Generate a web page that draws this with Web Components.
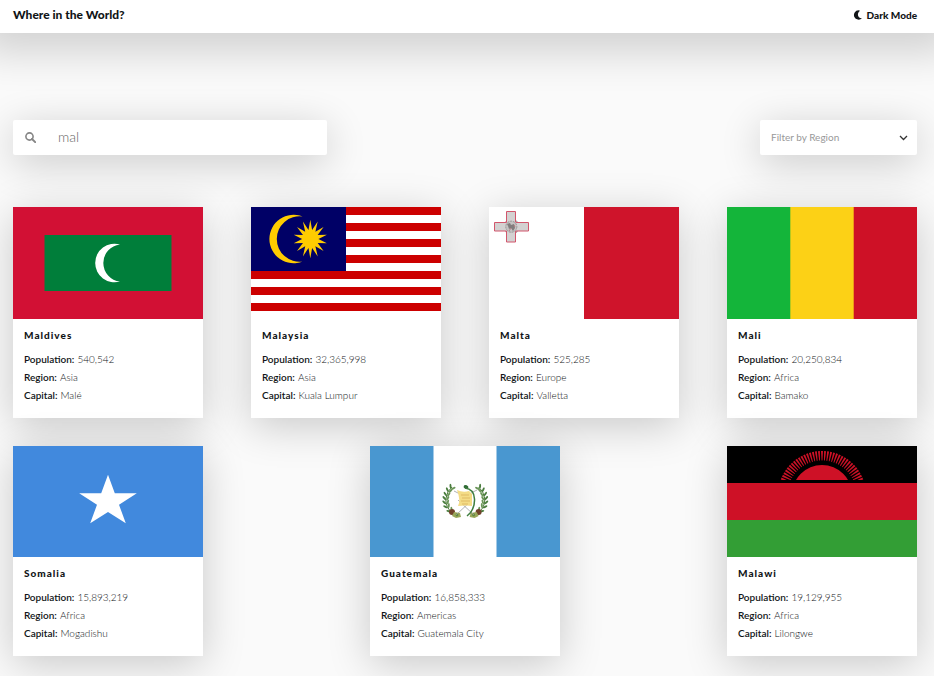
<!DOCTYPE html>
<html lang="en">
<head>
<meta charset="utf-8">
<meta name="viewport" content="width=device-width, initial-scale=1">
<title>Where in the World?</title>
<style>
body{margin:0;background:#fafafa;color:#111517;font-family:Lato,"Open Sans",sans-serif;font-size:10px;line-height:18px;
--surface:#fff;--ink:#111517;--muted:#858585;--shadow:0 8px 40px rgba(0,0,0,.2)}
</style>
</head>
<body>
<countries-app></countries-app>
<script>
const starPoints = (n, cx, cy, rx, ry, inner) => Array.from({length: n * 2}, (_, i) => {
  const a = Math.PI * i / n, k = i % 2 ? inner : 1;
  return (cx + Math.sin(a) * rx * k).toFixed(2) + ',' + (cy - Math.cos(a) * ry * k).toFixed(2);
}).join(' ');

const rays = () => Array.from({length: 39}, (_, i) => {
  const a = (-76 + i * 4) * Math.PI / 180, w = 0.023;
  const p = (r, t) => (95 + Math.sin(t) * r).toFixed(2) + ',' + (49 - Math.cos(t) * r).toFixed(2);
  return `<polygon points="${p(34.5, a - w * .5)} ${p(44, a - w)} ${p(44, a + w)} ${p(34.5, a + w * .5)}"/>`;
}).join('');

const branch = () => {
  let s = '<path d="M90 70C80 68 75 60 76 52Q77 45 82 41" fill="none" stroke="#4c7a3a" stroke-width="1"/>';
  const pts = [[82,41,30],[79,44,10],[77,48,0],[76,52,-5],[76,56,-15],[77,60,-30],[80,64,-45]];
  for (const [x, y, r] of pts) {
    s += `<g transform="translate(${x} ${y}) rotate(${r})" fill="#4a7d3e"><ellipse cx="-1.400" cy="-1" rx="1" ry="2.500" transform="rotate(-35)"/><ellipse cx="1.700" cy="-.6" rx="1" ry="2.500" fill="#6b9659" transform="rotate(35)"/></g>`;
  }
  return s + '<ellipse cx="82" cy="66" rx="3" ry="3" fill="#70422b"/><path d="M84 66l6 1 1 4-5 1-4-2z" fill="#9aa75a"/><circle cx="87" cy="69" r="1.400" fill="#5f8a3f"/>';
};

const flags = {
  Maldives: [112, '<path fill="#d21034" d="M0 0h190v112H0z"/><path fill="#007e3a" d="M31.500 28h127v56h-127z"/><path fill="#fff" d="M107 37.500A19.300 19.300 0 1 0 107 74.500A18.600 18.600 0 0 1 107 37.500z"/>'],
  Malaysia: [112, '<path fill="#fff" d="M0 0h190v112H0z"/><path stroke="#c00" stroke-width="8" d="M0 4h190M0 20h190M0 36h190M0 52h190M0 68h190M0 84h190M0 100h190"/><path fill="#006" d="M0 0h95v64H0z"/><g fill="#fc0"><path d="M51.500 9.500A24.200 24.200 0 1 0 51.500 54.500A22.700 22.700 0 1 1 51.500 9.500z"/><polygon points="' + starPoints(14, 59.3, 32, 17, 19.3, .48) + '"/></g>'],
  Malta: [112, '<path fill="#fff" d="M0 0h95v112H0z"/><path fill="#cf142b" d="M95 0h95v112H95z"/><circle cx="22.500" cy="19.700" r="8" fill="#aaa6a6"/><path fill="#d3d1d1" stroke="#d2566c" d="M17.500 4.500h9v11h13v8.500h-13v11h-9V24h-12v-8.500h12z"/><circle cx="22.300" cy="19.700" r="6" fill="#c4c2c2"/><circle cx="22.300" cy="19.700" r="5.500" fill="none" stroke="#9c9898" stroke-dasharray="2 1"/><path d="M18 17l3-1 1 2 3-1 1 4-2 3-2-3-2 1-1-3z" fill="#817d7d"/><path d="M22 21l-2 3M25 18l1 2" stroke="#b96d72" stroke-width=".8"/>'],
  Mali: [112, '<path fill="#14b53a" d="M0 0h64v112H0z"/><path fill="#fcd116" d="M63.300 0h64v112h-64z"/><path fill="#ce1126" d="M126.700 0H190v112h-63.300z"/>'],
  Somalia: [111, '<path fill="#4189dd" d="M0 0h190v111H0z"/><polygon fill="#fff" points="' + starPoints(5, 95, 55.6, 30.3, 26.9, .382) + '"/>'],
  Guatemala: [111, '<path fill="#4997d0" d="M0 0h190v111H0z"/><path fill="#fff" d="M63.500 0h63v111h-63z"/>' +
    branch() + '<g transform="matrix(-1 0 0 1 190.600 0)">' + branch() + '</g>' +
    '<path d="M86 69l16-15M104 69L88 54M84 45l6 3M107 44l-6 3" stroke="#9b9da0" stroke-width=".8"/><path d="M87 44q6 3 12 1l3 3v12q-6-1-14 0 3-5-1-16z" fill="#f4dc86"/><path d="M91 49h8M92 52h8M91 55h9M92 58h6" stroke="#d6ad56" stroke-width=".7"/><ellipse cx="96" cy="41" rx="2.500" ry="1.800" transform="rotate(25 96 41)" fill="#2f6b35"/><path d="M95 42q9 1 9.500 11Q105 64 97 70" fill="none" stroke="#3f7d3f" stroke-width="1.500"/>'],
  Malawi: [111, '<path d="M0 0h190v37H0z"/><path fill="#ce1126" d="M0 37h190v37H0z"/><path fill="#339e35" d="M0 74h190v37H0z"/><clipPath id="horizon"><path d="M0 0h190v34H0z"/></clipPath><g fill="#ce1126" clip-path="url(#horizon)"><circle cx="95" cy="49" r="30"/>' + rays() + '</g>']
};

const countries = [
  ['Maldives', '540,542', 'Asia', 'Malé'],
  ['Malaysia', '32,365,998', 'Asia', 'Kuala Lumpur'],
  ['Malta', '525,285', 'Europe', 'Valletta'],
  ['Mali', '20,250,834', 'Africa', 'Bamako'],
  ['Somalia', '15,893,219', 'Africa', 'Mogadishu'],
  ['Guatemala', '16,858,333', 'Americas', 'Guatemala City'],
  ['Malawi', '19,129,955', 'Africa', 'Lilongwe']
];

class Base extends HTMLElement {
  constructor() { super(); this.attachShadow({mode: 'open'}); }
  connectedCallback() { this.shadowRoot.innerHTML = '<style>*{box-sizing:border-box}</style>' + this.render(); }
}

customElements.define('theme-toggle', class extends Base {
  render() { return `<style>
    :host{display:block}
    button{display:flex;align-items:center;gap:4px;padding:0;border:0;background:none;color:inherit;font:inherit;font-size:10px;font-weight:900;cursor:pointer}
    svg{width:10px;height:10px}
    </style><button type="button"><svg viewBox="0 0 10 10" aria-hidden="true"><path fill="currentColor" d="M5.500.3A4.700 4.700 0 1 0 9 8.300C5.200 8.600 3.200 3.800 6.800.9Q6.900.4 5.500.3z"/></svg>Dark Mode</button>`; }
});

customElements.define('site-header', class extends Base {
  render() { return `<style>
    :host{display:block}
    header{display:flex;align-items:center;justify-content:space-between;height:33px;padding:0 17px 4px 13px;background:var(--surface);box-shadow:0 0 40px 20px rgba(0,0,0,.16)}
    h1{margin:0;font-size:12px;font-weight:900}
    </style><header><h1><slot></slot></h1><theme-toggle></theme-toggle></header>`; }
});

customElements.define('country-search', class extends Base {
  render() { return `<style>
    :host{display:block;flex:0 1 314px}
    label{display:flex;align-items:center;gap:22px;height:35px;padding:0 12px;background:var(--surface);border-radius:2px;box-shadow:var(--shadow);color:var(--muted)}
    svg{flex:none;width:11px;height:11px}
    input{flex:1;min-width:0;padding:0 0 2px;border:0;outline:0;background:none;color:#666;font:inherit;font-size:14px;font-weight:300}
    </style><label><svg viewBox="0 0 11 11" aria-hidden="true"><circle cx="4.500" cy="4.500" r="3.600" fill="none" stroke="currentColor" stroke-width="1.600"/><path d="M7 7l3.200 3.200" stroke="currentColor" stroke-width="1.900" stroke-linecap="round"/></svg><input type="text" aria-label="Search for a country" value="mal"></label>`; }
});

customElements.define('region-filter', class extends Base {
  render() { return `<style>
    :host{display:grid;flex:0 0 157px;height:35px;align-items:center;background:var(--surface);border-radius:2px;box-shadow:var(--shadow)}
    select,svg{grid-area:1/1}
    select{width:100%;height:100%;padding:0 28px 2px 11px;border:0;outline:0;appearance:none;background:none;color:#999;font:inherit}
    svg{justify-self:end;width:9px;height:6px;margin-right:9px;pointer-events:none}
    </style><select aria-label="Filter by Region"><option>Filter by Region</option><option>Africa</option><option>Americas</option><option>Asia</option><option>Europe</option><option>Oceania</option></select>
    <svg viewBox="0 0 9 6" aria-hidden="true"><path d="M1 1l3.500 3.500L8 1" fill="none" stroke="#333" stroke-width="1.300"/></svg>`; }
});

customElements.define('country-flag', class extends Base {
  render() {
    const name = this.getAttribute('name'), [h, art] = flags[name];
    return `<style>:host{display:block}svg{display:block;width:100%}</style><svg viewBox="0 0 190 ${h}" role="img" aria-label="Flag of ${name}">${art}</svg>`;
  }
});

customElements.define('country-card', class extends Base {
  render() { return `<style>
    :host{display:block;flex:0 0 190px;background:var(--surface);box-shadow:var(--shadow)}
    .info{padding:7px 11px 14px}
    h2{margin:0 0 6px;font-size:10px;line-height:18px;font-weight:900;letter-spacing:1px}
    dl{margin:0}
    dl div{display:flex;gap:3px}
    dt{font-weight:600}
    dd{margin:0;font-weight:300}
    </style><country-flag name="${this.getAttribute('name')}"></country-flag>
    <div class="info"><h2>${this.getAttribute('name')}</h2><dl>
    <div><dt>Population:</dt><dd><slot name="population"></slot></dd></div>
    <div><dt>Region:</dt><dd><slot name="region"></slot></dd></div>
    <div><dt>Capital:</dt><dd><slot name="capital"></slot></dd></div></dl></div>`; }
});

customElements.define('countries-app', class extends Base {
  render() { return `<style>
    :host{display:block;overflow:hidden}
    main{padding:87px 17px 20px 13px}
    .tools{display:flex;justify-content:space-between;gap:24px;margin-bottom:52px}
    .cards{display:flex;flex-wrap:wrap;justify-content:space-between;gap:28px}
    </style><site-header>Where in the World?</site-header>
    <main><div class="tools"><country-search></country-search><region-filter></region-filter></div>
    <div class="cards">${countries.map(([n, p, r, c]) => `<country-card name="${n}"><span slot="population">${p}</span><span slot="region">${r}</span><span slot="capital">${c}</span></country-card>`).join('')}</div></main>`; }
});
</script>
</body>
</html>
